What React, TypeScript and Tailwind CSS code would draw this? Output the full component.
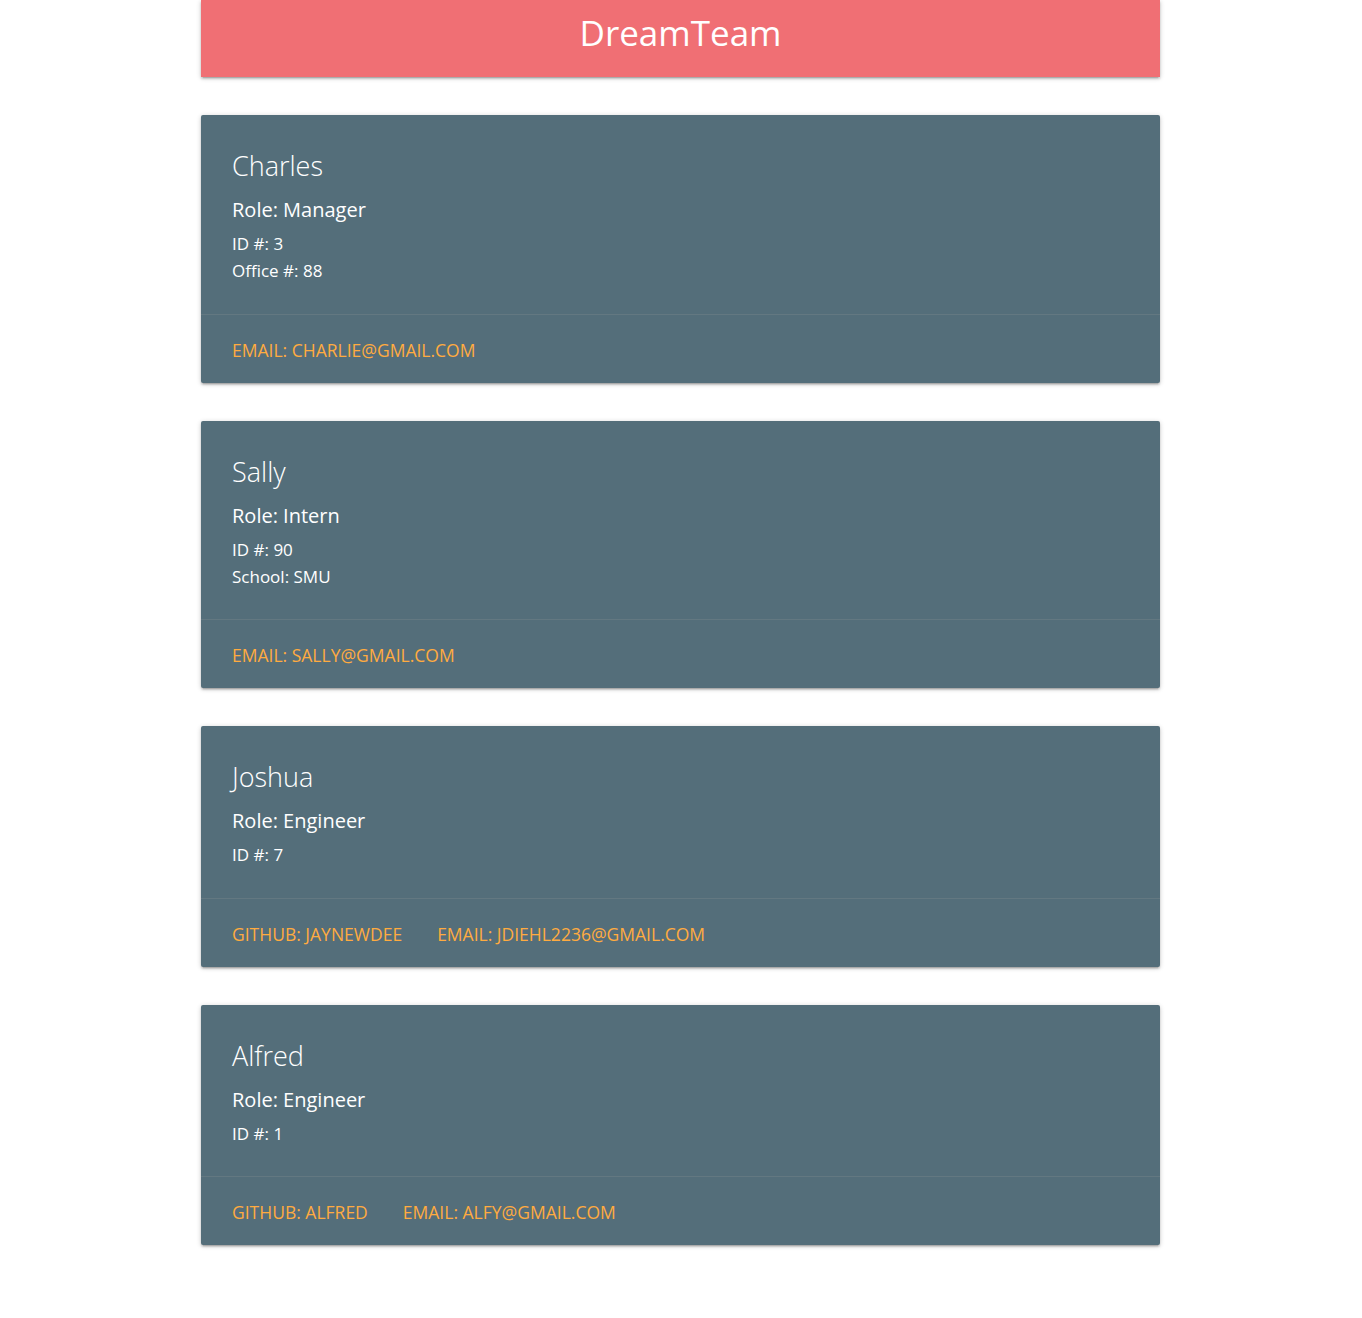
import React from 'react';

interface Member {
  name: string;
  role: string;
  id: number;
  extra?: string;
  github?: string;
  email: string;
}

const team: Member[] = [
  { name: 'Charles', role: 'Manager', id: 3, extra: 'Office #: 88', email: 'charlie@gmail.com' },
  { name: 'Sally', role: 'Intern', id: 90, extra: 'School: SMU', email: 'sally@gmail.com' },
  { name: 'Joshua', role: 'Engineer', id: 7, github: 'jaynewdee', email: 'jdiehl2236@gmail.com' },
  { name: 'Alfred', role: 'Engineer', id: 1, github: 'alfred', email: 'alfy@gmail.com' },
];

const shadow =
  'shadow-[0_2px_2px_0_rgba(0,0,0,0.14),0_3px_1px_-2px_rgba(0,0,0,0.12),0_1px_5px_0_rgba(0,0,0,0.2)]';

const MemberCard: React.FC<{ member: Member }> = ({ member }) => (
  <div className={`bg-[#546e7a] rounded-[2px] text-white ${shadow}`}>
    {/* Content */}
    <div className="px-[31px] pt-[30px] pb-[29.5px]">
      <div className="text-[27px] font-light leading-[42px]">{member.name}</div>
      <div className="text-[20px] leading-[30px] mt-2">Role: {member.role}</div>
      <div className="text-[17px] leading-[27px] mt-[5px]">
        <div>ID #: {member.id}</div>
        {member.extra && <div>{member.extra}</div>}
      </div>
    </div>

    {/* Actions */}
    <div className="border-t border-[rgba(160,160,160,0.2)] px-[31px] pt-[21px] pb-[19px] flex gap-[35px] text-[17.5px] leading-[28px] uppercase text-[#ffab40]">
      {member.github && <span>GitHub: {member.github}</span>}
      <span>Email: {member.email}</span>
    </div>
  </div>
);

export default function App() {
  return (
    <div className="min-h-[1318px] bg-white font-['Open_Sans',sans-serif]">
      <div className="w-[959px] ml-[201px]">
        <header className={`h-[77px] bg-[#f06f74] flex items-center justify-center ${shadow}`}>
          <h1 className="text-white text-[35px] leading-none -mt-3">DreamTeam</h1>
        </header>

        <div className="flex flex-col gap-[38px] mt-[38px]">
          {team.map((m) => (
            <MemberCard key={m.name} member={m} />
          ))}
        </div>
      </div>
    </div>
  );
}
